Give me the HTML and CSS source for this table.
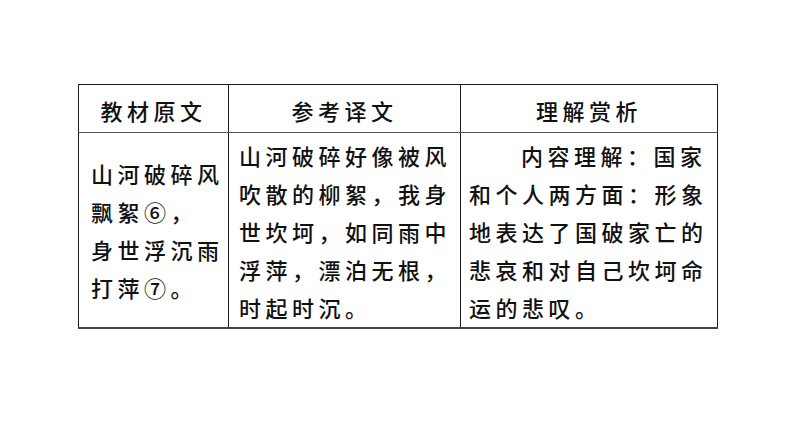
FILE: index.html
```html
<!DOCTYPE html>
<html lang="zh">
<head>
<meta charset="utf-8">
<link rel="stylesheet" href="styles.css">
</head>
<body>
<div class="page">
  <table class="grid">
    <colgroup>
      <col class="c1">
      <col class="c2">
      <col class="c3">
    </colgroup>
    <thead>
      <tr class="head">
        <th>教材原文</th>
        <th>参考译文</th>
        <th>理解赏析</th>
      </tr>
    </thead>
    <tbody>
      <tr class="body">
        <td class="orig">山河破碎风<br>飘絮⑥，<br>身世浮沉雨<br>打萍⑦。</td>
        <td class="trans">山河破碎好像被风吹散的柳絮，我身世坎坷，如同雨中浮萍，漂泊无根，时起时沉。</td>
        <td class="note"><span class="indent"></span>内容理解：国家和个人两方面：形象地表达了国破家亡的悲哀和对自己坎坷命运的悲叹。</td>
      </tr>
    </tbody>
  </table>
</div>
</body>
</html>
```

FILE: styles.css
```css
html, body {
  margin: 0;
  padding: 0;
  background: #ffffff;
}

.page {
  width: 794px;
  height: 447px;
  padding: 84px 0 0 78px;
  box-sizing: border-box;
  font-family: "Noto Sans CJK SC", "Noto Sans", sans-serif;
  color: #111111;
}

.grid {
  border-collapse: collapse;
  table-layout: fixed;
  width: 639px;
}

.c1 { width: 150px; }
.c2 { width: 232px; }
.c3 { width: 257px; }

.grid th,
.grid td {
  border: 1px solid #1a1a1a;
  font-size: 22px;
  font-weight: 500;
  letter-spacing: 4.5px;
  padding: 0;
}

.grid th {
  height: 45px;
  text-align: center;
  vertical-align: middle;
  line-height: 30px;
  padding-top: 2px;
  border-bottom-color: #555555;
}

.grid td {
  height: 192px;
  vertical-align: middle;
  line-height: 38px;
  text-align: left;
  word-break: break-all;
}

.grid tbody td {
  border-bottom: 2px solid #444444;
}

.orig {
  padding: 0 4px 0 12px !important;
}

.trans {
  padding: 2px 4px 0 10px !important;
}

.note {
  padding: 2px 4px 0 8px !important;
}

.indent {
  display: inline-block;
  width: 52px;
}
```
